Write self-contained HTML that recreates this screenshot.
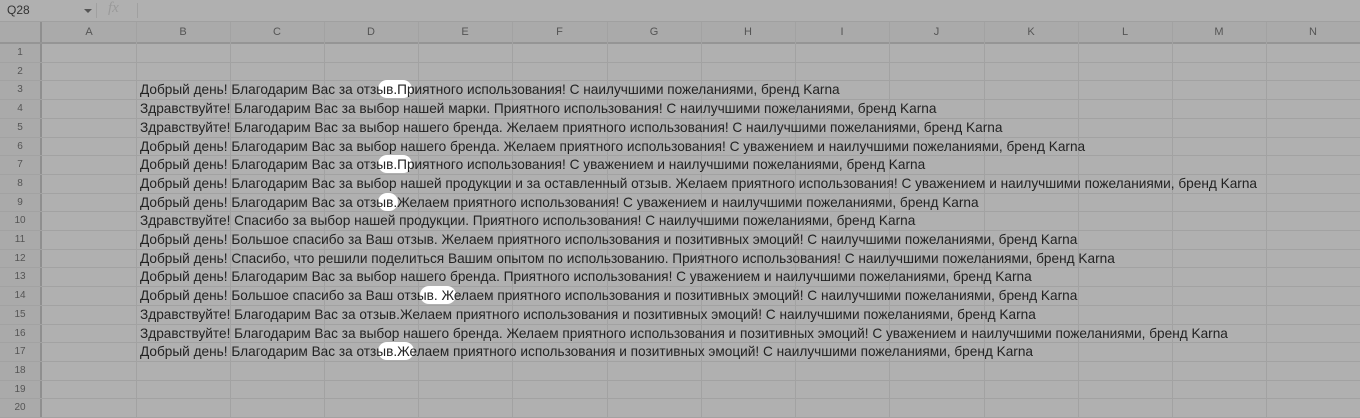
<!DOCTYPE html><html><head><meta charset="utf-8"><style>
body{margin:0;width:1360px;height:417px;overflow:hidden;background:#b0b0b0;font-family:"Liberation Sans",Arial,sans-serif;position:relative}
.a{position:absolute}
.vl{position:absolute;top:22px;width:1px;height:395px;background:#a2a2a2}
.hl{position:absolute;left:0;width:1360px;height:1px;background:#a2a2a2}
.ch{position:absolute;top:22px;height:21px;line-height:21px;text-align:center;font-size:11px;color:#555}
.rn{position:absolute;left:0;width:40px;text-align:center;font-size:10px;color:#555}
.t{position:absolute;left:140px;font-size:13.65px;color:#222;white-space:nowrap}
.p{position:absolute;background:#fff;border-radius:9px;height:18px}
</style></head><body>
<div class="a" style="left:0;top:0;width:1360px;height:21px;background:#b0b0b0;border-bottom:1px solid #a0a0a0"></div>
<div class="a" style="left:7px;top:3px;font-size:12px;color:#333">Q28</div>
<div class="a" style="left:84px;top:9px;width:0;height:0;border-left:4px solid transparent;border-right:4px solid transparent;border-top:4px solid #555"></div>
<div class="a" style="left:96px;top:3px;width:1px;height:15px;background:#a0a0a0"></div>
<div class="a" style="left:108px;top:0px;font-size:15px;font-style:italic;color:#9a9a9a;font-family:'Liberation Serif',serif">fx</div>
<div class="a" style="left:137px;top:3px;width:1px;height:15px;background:#a0a0a0"></div>
<div class="a" style="left:0;top:22px;width:1360px;height:21px;background:#aaaaaa"></div>
<div class="a" style="left:0;top:43px;width:40px;height:374px;background:#aaaaaa"></div>
<div class="a" style="left:40px;top:22px;width:2px;height:395px;background:#8f8f8f"></div>
<div class="a" style="left:0;top:42px;width:1360px;height:2px;background:#959595"></div>
<div id="g"></div>
<script>
var h='';var xs=[42,136,230,324,418,512,607,701,795,889,984,1078,1172,1266,1360];var L='ABCDEFGHIJKLMN';
for(var i=1;i<xs.length-1;i++)h+='<div class="vl" style="left:'+xs[i]+'px"></div>';
for(var i=0;i<14;i++)h+='<div class="ch" style="left:'+xs[i]+'px;width:'+(xs[i+1]-xs[i])+'px">'+L[i]+'</div>';
for(var r=1;r<=20;r++){var y=43+r*18.7;h+='<div class="hl" style="top:'+Math.round(y)+'px"></div>';h+='<div class="rn" style="top:'+Math.round(y-18.7)+'px;height:19px;line-height:19px">'+r+'</div>';}
var P=[[3,378,34],[7,378,34],[9,378,20],[14,420,36],[17,378,36]];
P.forEach(function(p){h+='<div class="p" style="left:'+p[1]+'px;width:'+p[2]+'px;top:'+Math.round(43+(p[0]-1)*18.7)+'px"></div>';});
var T=["Добрый день! Благодарим Вас за отзыв.Приятного использования! С наилучшими пожеланиями, бренд Karna",
"Здравствуйте! Благодарим Вас за выбор нашей марки. Приятного использования! С наилучшими пожеланиями, бренд Karna",
"Здравствуйте! Благодарим Вас за выбор нашего бренда. Желаем приятного использования! С наилучшими пожеланиями, бренд Karna",
"Добрый день! Благодарим Вас за выбор нашего бренда. Желаем приятного использования! С уважением и наилучшими пожеланиями, бренд Karna",
"Добрый день! Благодарим Вас за отзыв.Приятного использования! С уважением и наилучшими пожеланиями, бренд Karna",
"Добрый день! Благодарим Вас за выбор нашей продукции и за оставленный отзыв. Желаем приятного использования! С уважением и наилучшими пожеланиями, бренд Karna",
"Добрый день! Благодарим Вас за отзыв.Желаем приятного использования! С уважением и наилучшими пожеланиями, бренд Karna",
"Здравствуйте! Спасибо за выбор нашей продукции. Приятного использования! С наилучшими пожеланиями, бренд Karna",
"Добрый день! Большое спасибо за Ваш отзыв. Желаем приятного использования и позитивных эмоций! С наилучшими пожеланиями, бренд Karna",
"Добрый день! Спасибо, что решили поделиться Вашим опытом по использованию. Приятного использования! С наилучшими пожеланиями, бренд Karna",
"Добрый день! Благодарим Вас за выбор нашего бренда. Приятного использования! С уважением и наилучшими пожеланиями, бренд Karna",
"Добрый день! Большое спасибо за Ваш отзыв. Желаем приятного использования и позитивных эмоций! С наилучшими пожеланиями, бренд Karna",
"Здравствуйте! Благодарим Вас за отзыв.Желаем приятного использования и позитивных эмоций! С наилучшими пожеланиями, бренд Karna",
"Здравствуйте! Благодарим Вас за выбор нашего бренда. Желаем приятного использования и позитивных эмоций! С уважением и наилучшими пожеланиями, бренд Karna",
"Добрый день! Благодарим Вас за отзыв.Желаем приятного использования и позитивных эмоций! С наилучшими пожеланиями, бренд Karna"];
T.forEach(function(t,i){var r=i+3;h+='<div class="t" style="top:'+Math.round(43+(r-1)*18.7)+'px;height:19px;line-height:19px">'+t+'</div>';});
document.getElementById('g').innerHTML=h;
</script>
</body></html>
